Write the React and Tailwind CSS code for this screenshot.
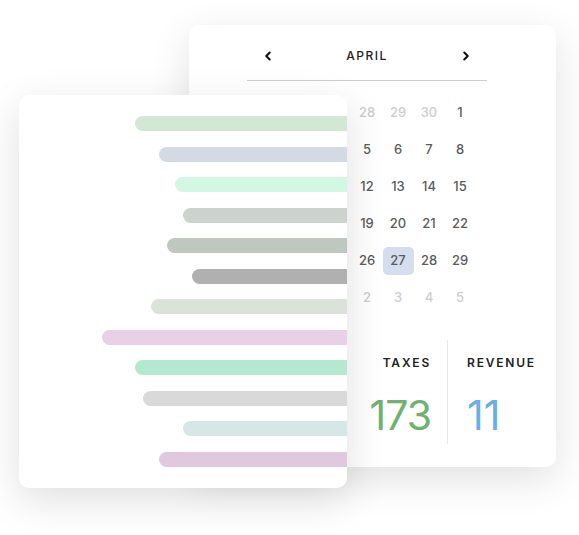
import React from 'react';
import { ChevronLeft, ChevronRight } from 'lucide-react';

const weeks = [
  [[25, 1], [26, 1], [27, 1], [28, 1], [29, 1], [30, 1], [1, 0]],
  [[2, 0], [3, 0], [4, 0], [5, 0], [6, 0], [7, 0], [8, 0]],
  [[9, 0], [10, 0], [11, 0], [12, 0], [13, 0], [14, 0], [15, 0]],
  [[16, 0], [17, 0], [18, 0], [19, 0], [20, 0], [21, 0], [22, 0]],
  [[23, 0], [24, 0], [25, 0], [26, 0], [27, 2], [28, 0], [29, 0]],
  [[30, 1], [1, 1], [2, 1], [2, 1], [3, 1], [4, 1], [5, 1]],
];

const bars = [
  { w: 212, color: 'bg-[#d2e8d4]' },
  { w: 188, color: 'bg-[#d4dae5]' },
  { w: 172, color: 'bg-[#d2f7e2]' },
  { w: 164, color: 'bg-[#ccd2cd]' },
  { w: 180, color: 'bg-[#bfc8bf]' },
  { w: 155, color: 'bg-[#b0b0b0]' },
  { w: 196, color: 'bg-[#dbe2da]' },
  { w: 245, color: 'bg-[#e8d0e6]' },
  { w: 212, color: 'bg-[#b3e8d1]' },
  { w: 204, color: 'bg-[#d9d9d9]' },
  { w: 164, color: 'bg-[#d5e7e6]' },
  { w: 188, color: 'bg-[#e0c8de]' },
];

const Calendar = () => (
  <div className="absolute left-[189px] top-[25px] w-[367px] h-[442px] bg-white rounded-[10px] shadow-[0_12px_40px_rgba(0,0,0,0.12)]">
    <div className="ml-[58px] w-[240px] pt-[21px]">
      <div className="flex items-center justify-between h-[20px] px-[14px]">
        <ChevronLeft size={14} strokeWidth={3.5} className="text-[#111]" />
        <span className="text-[12px] font-medium tracking-[1.5px] text-[#222]">APRIL</span>
        <ChevronRight size={14} strokeWidth={3.5} className="text-[#111]" />
      </div>
      <div className="mt-[14px] h-px bg-[#cfcfcf]" />
      <div className="mx-auto w-[217px] mt-[13px]">
        {weeks.map((week, i) => (
          <div key={i} className="grid grid-cols-7 h-[37px]">
            {week.map(([d, s], j) => (
              <div key={j} className="flex items-center justify-center">
                <span
                  className={
                    s === 2
                      ? 'flex items-center justify-center w-[32px] h-[28px] rounded-[5px] bg-[#d5deef] text-[13px] font-medium text-[#5c5c5c]'
                      : s === 1
                      ? 'text-[13px] font-medium text-[#cdcdcd]'
                      : 'text-[13px] font-medium text-[#5c5c5c]'
                  }
                >
                  {d}
                </span>
              </div>
            ))}
          </div>
        ))}
      </div>
    </div>
    <div className="flex mt-[24px] h-[104px]">
      <div className="w-[258px] pr-[16px] flex flex-col items-end">
        <span className="mt-[14px] text-[12px] font-semibold tracking-[1.8px] text-[#222]">TAXES</span>
        <span className="mt-[23px] text-[41px] font-normal leading-none text-[#6db36f] tracking-[-1px]">173</span>
      </div>
      <div className="w-px bg-[#e6e6e6]" />
      <div className="pl-[19px] flex flex-col items-start">
        <span className="mt-[14px] text-[12px] font-semibold tracking-[1.8px] text-[#222]">REVENUE</span>
        <span className="mt-[23px] text-[41px] font-normal leading-none text-[#6aaee6]">11</span>
      </div>
    </div>
  </div>
);

const BarCard = () => (
  <div className="absolute left-[19px] top-[95px] w-[328px] h-[393px] bg-white rounded-[10px] overflow-hidden shadow-[0_12px_40px_rgba(0,0,0,0.13)]">
    <div className="flex flex-col items-end gap-[15.5px] pt-[21px]">
      {bars.map((b, i) => (
        <div key={i} className={`h-[15px] rounded-l-full ${b.color}`} style={{ width: b.w }} />
      ))}
    </div>
  </div>
);

export default function App() {
  return (
    <div className="relative w-[579px] h-[535px] bg-white overflow-hidden font-['Inter',sans-serif]">
      <Calendar />
      <BarCard />
    </div>
  );
}
